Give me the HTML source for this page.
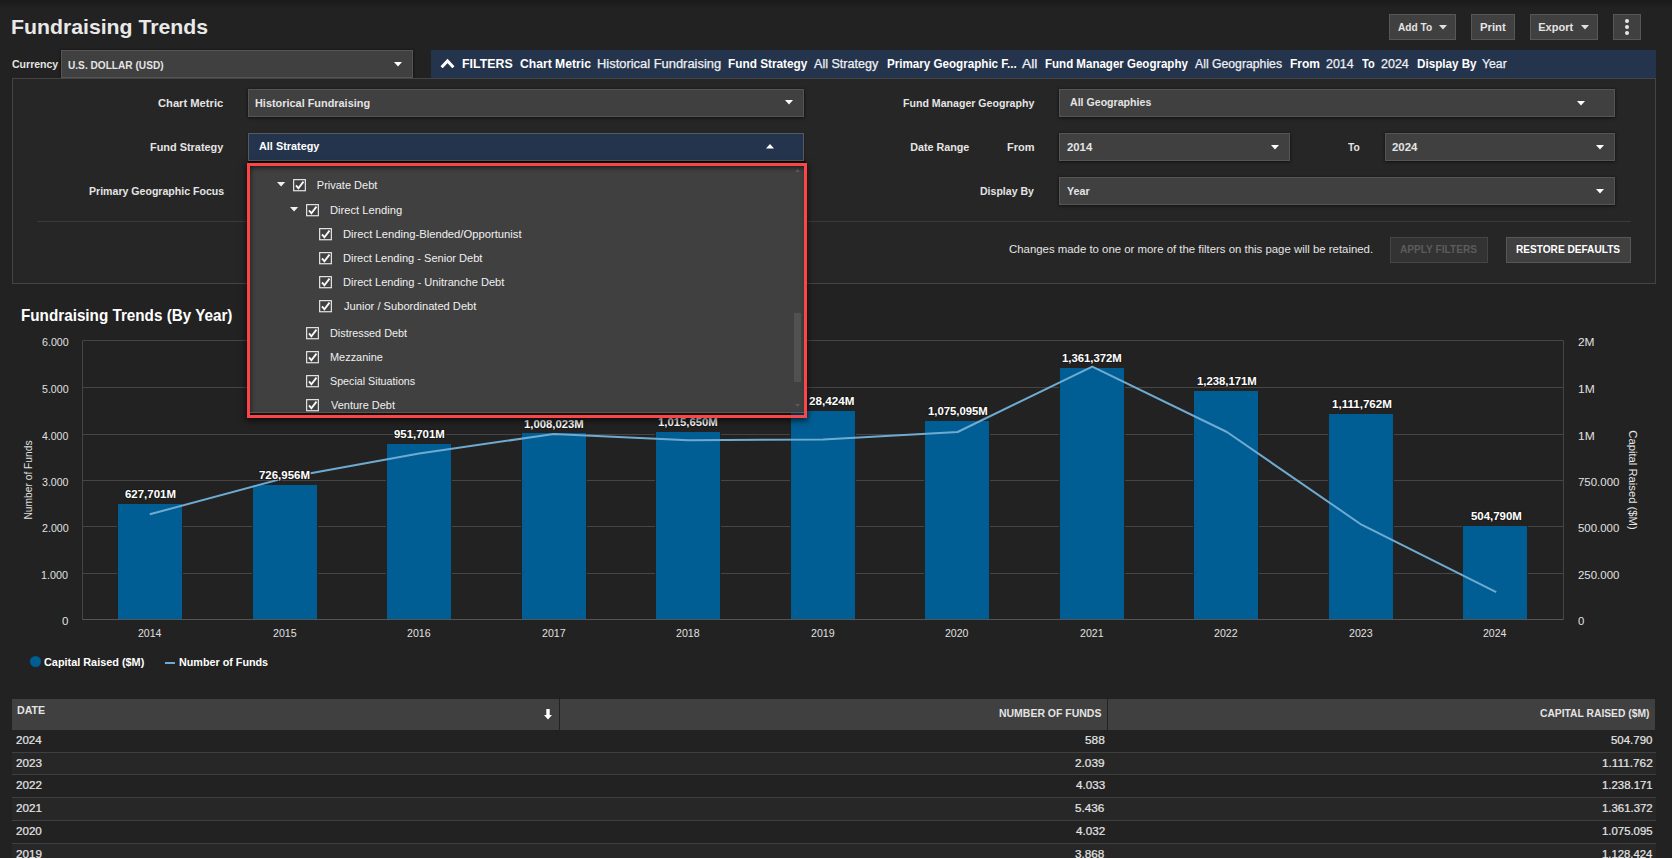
<!DOCTYPE html>
<html><head><meta charset="utf-8"><title>Fundraising Trends</title>
<style>
html,body{margin:0;padding:0;}
body{width:1672px;height:858px;overflow:hidden;background:#222222;position:relative;font-family:"Liberation Sans",sans-serif;}
.t{position:absolute;height:20px;line-height:20px;white-space:nowrap;transform-origin:0 50%;}
.sel{box-sizing:border-box;background:#404040;border:1px solid #555555;box-shadow:0 1px 3px rgba(0,0,0,.5),0 0 2px rgba(0,0,0,.3);}
.selo{box-sizing:border-box;background:#25344d;border:1px solid #565b63;box-shadow:0 1px 2px rgba(0,0,0,.45);}
.btn{box-sizing:border-box;background:#404040;border:1px solid #575757;}
svg{display:block;overflow:visible;}
</style></head><body>
<div style="position:absolute;left:0px;top:0px;width:1672px;height:9px;background:linear-gradient(#1b1b1b,#222222);"></div>
<div class="t" style="left:10.62px;top:16.5px;font-size:21px;color:#e9e9e9;font-weight:bold;transform:scaleX(1.0115);">Fundraising Trends</div>
<div class="btn" style="position:absolute;left:1389px;top:14px;width:67px;height:26px;"></div>
<div class="t" style="left:1397.75px;top:16.5px;font-size:11px;color:#e4e4e4;font-weight:bold;transform:scaleX(0.9201);">Add To</div>
<svg style="position:absolute;left:1439.0px;top:24.9px" width="8" height="4.5" viewBox="0 0 8 4.5"><polygon points="0,0 8,0 4.0,4.5" fill="#e0e0e0"/></svg>
<div class="btn" style="position:absolute;left:1471px;top:14px;width:44px;height:26px;"></div>
<div class="t" style="left:1479.76px;top:16.5px;font-size:11px;color:#e4e4e4;font-weight:bold;transform:scaleX(1.0307);">Print</div>
<div class="btn" style="position:absolute;left:1530px;top:14px;width:68px;height:26px;"></div>
<div class="t" style="left:1538.29px;top:16.5px;font-size:11px;color:#e4e4e4;font-weight:bold;">Export</div>
<svg style="position:absolute;left:1581.0px;top:24.9px" width="8" height="4.5" viewBox="0 0 8 4.5"><polygon points="0,0 8,0 4.0,4.5" fill="#e0e0e0"/></svg>
<div class="btn" style="position:absolute;left:1613px;top:14px;width:28px;height:26px;"></div>
<div style="position:absolute;left:1625px;top:19px;width:4px;height:4px;border-radius:50%;background:#e8e8e8;"></div>
<div style="position:absolute;left:1625px;top:25px;width:4px;height:4px;border-radius:50%;background:#e8e8e8;"></div>
<div style="position:absolute;left:1625px;top:31px;width:4px;height:4px;border-radius:50%;background:#e8e8e8;"></div>
<div class="t" style="left:11.58px;top:53.5px;font-size:10.75px;color:#e4e4e4;font-weight:bold;transform:scaleX(0.9794);">Currency</div>
<div class="sel" style="position:absolute;left:61px;top:50px;width:352px;height:28px;"></div>
<div class="t" style="left:68.39px;top:54.5px;font-size:10.75px;color:#e4e4e4;font-weight:bold;transform:scaleX(0.9417);">U.S. DOLLAR (USD)</div>
<svg style="position:absolute;left:394.0px;top:61.8px" width="8" height="4.5" viewBox="0 0 8 4.5"><polygon points="0,0 8,0 4.0,4.5" fill="#fff"/></svg>
<div style="position:absolute;left:431px;top:50px;width:1225px;height:28px;background:#25344d;"></div>
<svg style="position:absolute;left:440px;top:58px" width="15" height="11" viewBox="0 0 15 11"><polyline points="1.6,9.2 7.5,3 13.4,9.2" fill="none" stroke="#fff" stroke-width="3"/></svg>
<div class="t" style="left:461.90px;top:54.0px;font-size:12.25px;color:#ffffff;font-weight:bold;transform:scaleX(1.0107);">FILTERS</div>
<div class="t" style="left:520.41px;top:54.0px;font-size:12px;color:#ffffff;font-weight:bold;transform:scaleX(1.0124);">Chart Metric</div>
<div class="t" style="left:596.77px;top:54.0px;font-size:12px;color:#eef0f3;transform:scaleX(1.0756);-webkit-text-stroke:0.25px #eef0f3;">Historical Fundraising</div>
<div class="t" style="left:728.13px;top:54.0px;font-size:12px;color:#ffffff;font-weight:bold;transform:scaleX(0.9842);">Fund Strategy</div>
<div class="t" style="left:814.30px;top:54.0px;font-size:12px;color:#eef0f3;transform:scaleX(1.0476);-webkit-text-stroke:0.25px #eef0f3;">All Strategy</div>
<div class="t" style="left:886.94px;top:54.0px;font-size:12px;color:#ffffff;font-weight:bold;transform:scaleX(0.9684);">Primary Geographic F...</div>
<div class="t" style="left:1022.00px;top:54.0px;font-size:12px;color:#eef0f3;transform:scaleX(1.1587);-webkit-text-stroke:0.25px #eef0f3;">All</div>
<div class="t" style="left:1045.45px;top:54.0px;font-size:12px;color:#ffffff;font-weight:bold;transform:scaleX(0.9608);">Fund Manager Geography</div>
<div class="t" style="left:1194.60px;top:54.0px;font-size:12px;color:#eef0f3;transform:scaleX(1.0193);-webkit-text-stroke:0.25px #eef0f3;">All Geographies</div>
<div class="t" style="left:1290.02px;top:54.0px;font-size:12px;color:#ffffff;font-weight:bold;">From</div>
<div class="t" style="left:1325.78px;top:54.0px;font-size:12px;color:#eef0f3;transform:scaleX(1.0349);-webkit-text-stroke:0.25px #eef0f3;">2014</div>
<div class="t" style="left:1362.49px;top:54.0px;font-size:12px;color:#ffffff;font-weight:bold;transform:scaleX(0.9167);">To</div>
<div class="t" style="left:1381.07px;top:54.0px;font-size:12px;color:#eef0f3;transform:scaleX(1.0426);-webkit-text-stroke:0.25px #eef0f3;">2024</div>
<div class="t" style="left:1416.84px;top:54.0px;font-size:12px;color:#ffffff;font-weight:bold;transform:scaleX(0.9713);">Display By</div>
<div class="t" style="left:1482.15px;top:54.0px;font-size:12px;color:#eef0f3;transform:scaleX(1.0218);-webkit-text-stroke:0.25px #eef0f3;">Year</div>
<div style="position:absolute;left:12px;top:78px;width:1644px;height:206px;box-sizing:border-box;background:#262626;border:1px solid #444444;"></div>
<div style="position:absolute;left:37px;top:221px;width:1594px;height:1px;background:#3a3a3a;"></div>
<div class="t" style="left:158.35px;top:92.5px;font-size:10.75px;color:#e4e4e4;font-weight:bold;transform:scaleX(1.0399);">Chart Metric</div>
<div class="t" style="left:149.99px;top:136.5px;font-size:10.75px;color:#e4e4e4;font-weight:bold;transform:scaleX(1.0148);">Fund Strategy</div>
<div class="t" style="left:88.51px;top:180.5px;font-size:10.75px;color:#e4e4e4;font-weight:bold;transform:scaleX(0.9838);">Primary Geographic Focus</div>
<div class="sel" style="position:absolute;left:248px;top:89px;width:556px;height:28px;"></div>
<div class="t" style="left:255.49px;top:92.5px;font-size:10.75px;color:#e4e4e4;font-weight:bold;transform:scaleX(1.0137);">Historical Fundraising</div>
<svg style="position:absolute;left:785.0px;top:100.2px" width="8" height="4.5" viewBox="0 0 8 4.5"><polygon points="0,0 8,0 4.0,4.5" fill="#fff"/></svg>
<div class="selo" style="position:absolute;left:248px;top:133px;width:556px;height:28px;"></div>
<div class="t" style="left:258.93px;top:135.5px;font-size:10.75px;color:#ffffff;font-weight:bold;transform:scaleX(1.0110);">All Strategy</div>
<svg style="position:absolute;left:766.0px;top:144.2px" width="8" height="4.5" viewBox="0 0 8 4.5"><polygon points="0,4.5 4.0,0 8,4.5" fill="#fff"/></svg>
<div class="t" style="left:902.91px;top:92.5px;font-size:10.75px;color:#e4e4e4;font-weight:bold;transform:scaleX(0.9857);">Fund Manager Geography</div>
<div class="t" style="left:910.20px;top:136.5px;font-size:10.75px;color:#e4e4e4;font-weight:bold;">Date Range</div>
<div class="t" style="left:1007.39px;top:136.5px;font-size:10.75px;color:#e4e4e4;font-weight:bold;transform:scaleX(1.0223);">From</div>
<div class="t" style="left:1348.10px;top:136.5px;font-size:10.75px;color:#e4e4e4;font-weight:bold;transform:scaleX(0.9556);">To</div>
<div class="t" style="left:980.31px;top:180.5px;font-size:10.75px;color:#e4e4e4;font-weight:bold;transform:scaleX(0.9809);">Display By</div>
<div class="sel" style="position:absolute;left:1059px;top:89px;width:556px;height:28px;"></div>
<div class="t" style="left:1069.94px;top:92.0px;font-size:10.75px;color:#e4e4e4;font-weight:bold;transform:scaleX(0.9859);">All Geographies</div>
<svg style="position:absolute;left:1577.0px;top:101.0px" width="8" height="4.5" viewBox="0 0 8 4.5"><polygon points="0,0 8,0 4.0,4.5" fill="#fff"/></svg>
<div class="sel" style="position:absolute;left:1059px;top:133px;width:231px;height:28px;"></div>
<div class="t" style="left:1067.06px;top:136.5px;font-size:10.75px;color:#e4e4e4;font-weight:bold;transform:scaleX(1.0553);">2014</div>
<svg style="position:absolute;left:1271.0px;top:144.8px" width="8" height="4.5" viewBox="0 0 8 4.5"><polygon points="0,0 8,0 4.0,4.5" fill="#fff"/></svg>
<div class="sel" style="position:absolute;left:1385px;top:133px;width:230px;height:28px;"></div>
<div class="t" style="left:1392.36px;top:136.5px;font-size:10.75px;color:#e4e4e4;font-weight:bold;transform:scaleX(1.0637);">2024</div>
<svg style="position:absolute;left:1596.0px;top:144.8px" width="8" height="4.5" viewBox="0 0 8 4.5"><polygon points="0,0 8,0 4.0,4.5" fill="#fff"/></svg>
<div class="sel" style="position:absolute;left:1059px;top:177px;width:556px;height:28px;"></div>
<div class="t" style="left:1067.24px;top:180.5px;font-size:10.75px;color:#e4e4e4;font-weight:bold;transform:scaleX(0.9949);">Year</div>
<svg style="position:absolute;left:1596.0px;top:188.8px" width="8" height="4.5" viewBox="0 0 8 4.5"><polygon points="0,0 8,0 4.0,4.5" fill="#fff"/></svg>
<div class="t" style="left:1009.03px;top:238.9px;font-size:11.5px;color:#e4e4e4;transform:scaleX(0.9905);">Changes made to one or more of the filters on this page will be retained.</div>
<div style="position:absolute;left:1390px;top:237px;width:98px;height:26px;box-sizing:border-box;background:#333333;border:1px solid #454545;"></div>
<div class="t" style="left:1400.45px;top:238.6px;font-size:11px;color:#5c5c5c;font-weight:bold;transform:scaleX(0.9218);">APPLY FILTERS</div>
<div class="btn" style="position:absolute;left:1506px;top:237px;width:125px;height:26px;"></div>
<div class="t" style="left:1516.34px;top:238.6px;font-size:11px;color:#ffffff;font-weight:bold;transform:scaleX(0.9185);">RESTORE DEFAULTS</div>
<div class="t" style="left:21.41px;top:305.0px;font-size:16.5px;color:#ffffff;font-weight:bold;transform:scaleX(0.9236);">Fundraising Trends (By Year)</div>
<svg style="position:absolute;left:0;top:0" width="1672" height="700" viewBox="0 0 1672 700"><line x1="82.5" y1="340.50" x2="1563.5" y2="340.50" stroke="#454545" stroke-width="1"/><line x1="82.5" y1="387.50" x2="1563.5" y2="387.50" stroke="#454545" stroke-width="1"/><line x1="82.5" y1="434.50" x2="1563.5" y2="434.50" stroke="#454545" stroke-width="1"/><line x1="82.5" y1="480.50" x2="1563.5" y2="480.50" stroke="#454545" stroke-width="1"/><line x1="82.5" y1="526.50" x2="1563.5" y2="526.50" stroke="#454545" stroke-width="1"/><line x1="82.5" y1="573.50" x2="1563.5" y2="573.50" stroke="#454545" stroke-width="1"/><line x1="82.5" y1="619.50" x2="1563.5" y2="619.50" stroke="#454545" stroke-width="1"/><line x1="82.5" y1="340.5" x2="82.5" y2="619.5" stroke="#454545" stroke-width="1"/><line x1="1563.5" y1="340.5" x2="1563.5" y2="619.5" stroke="#454545" stroke-width="1"/><rect x="117.5" y="503.5" width="65" height="116.00" fill="#005e94" stroke="#222222" stroke-width="1"/><rect x="252.5" y="484.5" width="65" height="135.00" fill="#005e94" stroke="#222222" stroke-width="1"/><rect x="386.5" y="443.5" width="65" height="176.00" fill="#005e94" stroke="#222222" stroke-width="1"/><rect x="521.5" y="432.5" width="65" height="187.00" fill="#005e94" stroke="#222222" stroke-width="1"/><rect x="655.5" y="431.5" width="65" height="188.00" fill="#005e94" stroke="#222222" stroke-width="1"/><rect x="790.5" y="410.5" width="65" height="209.00" fill="#005e94" stroke="#222222" stroke-width="1"/><rect x="924.5" y="420.5" width="65" height="199.00" fill="#005e94" stroke="#222222" stroke-width="1"/><rect x="1059.5" y="367.5" width="65" height="252.00" fill="#005e94" stroke="#222222" stroke-width="1"/><rect x="1193.5" y="390.5" width="65" height="229.00" fill="#005e94" stroke="#222222" stroke-width="1"/><rect x="1328.5" y="413.5" width="65" height="206.00" fill="#005e94" stroke="#222222" stroke-width="1"/><rect x="1462.5" y="525.5" width="65" height="94.00" fill="#005e94" stroke="#222222" stroke-width="1"/><line x1="82.5" y1="619.5" x2="1563.5" y2="619.5" stroke="#555" stroke-width="1"/><polyline points="149.8,514.3 284.5,478.1 419.1,453.5 553.7,434.0 688.4,440.2 823.0,439.6 957.6,432.0 1092.3,366.7 1226.9,432.0 1361.5,524.7 1496.2,592.2" fill="none" stroke="#6fabd1" stroke-width="2" stroke-linejoin="round"/></svg>
<div class="t" style="left:41.77px;top:332.7px;font-size:10px;color:#e0e0e0;transform:scaleX(1.0642);">6.000</div>
<div class="t" style="left:41.88px;top:379.7px;font-size:10px;color:#e0e0e0;transform:scaleX(1.0598);">5.000</div>
<div class="t" style="left:42.09px;top:426.7px;font-size:10px;color:#e0e0e0;transform:scaleX(1.0511);">4.000</div>
<div class="t" style="left:41.93px;top:472.7px;font-size:10px;color:#e0e0e0;transform:scaleX(1.0576);">3.000</div>
<div class="t" style="left:41.77px;top:518.7px;font-size:10px;color:#e0e0e0;transform:scaleX(1.0642);">2.000</div>
<div class="t" style="left:41.49px;top:565.7px;font-size:10px;color:#e0e0e0;transform:scaleX(1.0753);">1.000</div>
<div class="t" style="left:62.00px;top:611.7px;font-size:10px;color:#e0e0e0;transform:scaleX(1.1546);">0</div>
<div class="t" style="left:1577.90px;top:333.0px;font-size:10px;color:#e0e0e0;transform:scaleX(1.1905);">2M</div>
<div class="t" style="left:1577.60px;top:380.0px;font-size:10px;color:#e0e0e0;transform:scaleX(1.2000);">1M</div>
<div class="t" style="left:1577.60px;top:427.0px;font-size:10px;color:#e0e0e0;transform:scaleX(1.2000);">1M</div>
<div class="t" style="left:1577.93px;top:473.0px;font-size:10px;color:#e0e0e0;transform:scaleX(1.1445);">750.000</div>
<div class="t" style="left:1578.04px;top:519.0px;font-size:10px;color:#e0e0e0;transform:scaleX(1.1412);">500.000</div>
<div class="t" style="left:1577.93px;top:566.0px;font-size:10px;color:#e0e0e0;transform:scaleX(1.1445);">250.000</div>
<div class="t" style="left:1578.10px;top:612.0px;font-size:10px;color:#e0e0e0;transform:scaleX(1.1340);">0</div>
<div class="t" style="left:138.17px;top:624.0px;font-size:10px;color:#e0e0e0;transform:scaleX(1.0512);">2014</div>
<div class="t" style="left:272.67px;top:624.0px;font-size:10px;color:#e0e0e0;transform:scaleX(1.0585);">2015</div>
<div class="t" style="left:407.17px;top:624.0px;font-size:10px;color:#e0e0e0;transform:scaleX(1.0585);">2016</div>
<div class="t" style="left:541.67px;top:624.0px;font-size:10px;color:#e0e0e0;transform:scaleX(1.0610);">2017</div>
<div class="t" style="left:676.17px;top:624.0px;font-size:10px;color:#e0e0e0;transform:scaleX(1.0585);">2018</div>
<div class="t" style="left:810.67px;top:624.0px;font-size:10px;color:#e0e0e0;transform:scaleX(1.0610);">2019</div>
<div class="t" style="left:945.17px;top:624.0px;font-size:10px;color:#e0e0e0;transform:scaleX(1.0561);">2020</div>
<div class="t" style="left:1079.67px;top:624.0px;font-size:10px;color:#e0e0e0;transform:scaleX(1.0610);">2021</div>
<div class="t" style="left:1214.17px;top:624.0px;font-size:10px;color:#e0e0e0;transform:scaleX(1.0610);">2022</div>
<div class="t" style="left:1348.67px;top:624.0px;font-size:10px;color:#e0e0e0;transform:scaleX(1.0585);">2023</div>
<div class="t" style="left:1483.17px;top:624.0px;font-size:10px;color:#e0e0e0;transform:scaleX(1.0512);">2024</div>
<div class="t" style="left:124.52px;top:483.7px;font-size:11px;color:#ffffff;font-weight:bold;transform:scaleX(1.0408);text-shadow:-1px -1px 0 #1c1c1c,1px -1px 0 #1c1c1c,-1px 1px 0 #1c1c1c,1px 1px 0 #1c1c1c,0 1px 0 #1c1c1c,0 -1px 0 #1c1c1c,1px 0 0 #1c1c1c,-1px 0 0 #1c1c1c;">627,701M</div>
<div class="t" style="left:259.10px;top:465.4px;font-size:11px;color:#ffffff;font-weight:bold;transform:scaleX(1.0419);text-shadow:-1px -1px 0 #1c1c1c,1px -1px 0 #1c1c1c,-1px 1px 0 #1c1c1c,1px 1px 0 #1c1c1c,0 1px 0 #1c1c1c,0 -1px 0 #1c1c1c,1px 0 0 #1c1c1c,-1px 0 0 #1c1c1c;">726,956M</div>
<div class="t" style="left:393.85px;top:423.9px;font-size:11px;color:#ffffff;font-weight:bold;transform:scaleX(1.0396);text-shadow:-1px -1px 0 #1c1c1c,1px -1px 0 #1c1c1c,-1px 1px 0 #1c1c1c,1px 1px 0 #1c1c1c,0 1px 0 #1c1c1c,0 -1px 0 #1c1c1c,1px 0 0 #1c1c1c,-1px 0 0 #1c1c1c;">951,701M</div>
<div class="t" style="left:523.85px;top:413.5px;font-size:11px;color:#ffffff;font-weight:bold;transform:scaleX(1.0289);text-shadow:-1px -1px 0 #1c1c1c,1px -1px 0 #1c1c1c,-1px 1px 0 #1c1c1c,1px 1px 0 #1c1c1c,0 1px 0 #1c1c1c,0 -1px 0 #1c1c1c,1px 0 0 #1c1c1c,-1px 0 0 #1c1c1c;">1,008,023M</div>
<div class="t" style="left:658.48px;top:412.1px;font-size:11px;color:#ffffff;font-weight:bold;transform:scaleX(1.0289);text-shadow:-1px -1px 0 #1c1c1c,1px -1px 0 #1c1c1c,-1px 1px 0 #1c1c1c,1px 1px 0 #1c1c1c,0 1px 0 #1c1c1c,0 -1px 0 #1c1c1c,1px 0 0 #1c1c1c,-1px 0 0 #1c1c1c;">1,015,650M</div>
<div class="t" style="left:808.65px;top:391.2px;font-size:11px;color:#ffffff;font-weight:bold;transform:scaleX(1.0598);text-shadow:-1px -1px 0 #1c1c1c,1px -1px 0 #1c1c1c,-1px 1px 0 #1c1c1c,1px 1px 0 #1c1c1c,0 1px 0 #1c1c1c,0 -1px 0 #1c1c1c,1px 0 0 #1c1c1c,-1px 0 0 #1c1c1c;">28,424M</div>
<div class="t" style="left:927.76px;top:401.1px;font-size:11px;color:#ffffff;font-weight:bold;transform:scaleX(1.0289);text-shadow:-1px -1px 0 #1c1c1c,1px -1px 0 #1c1c1c,-1px 1px 0 #1c1c1c,1px 1px 0 #1c1c1c,0 1px 0 #1c1c1c,0 -1px 0 #1c1c1c,1px 0 0 #1c1c1c,-1px 0 0 #1c1c1c;">1,075,095M</div>
<div class="t" style="left:1062.39px;top:348.2px;font-size:11px;color:#ffffff;font-weight:bold;transform:scaleX(1.0289);text-shadow:-1px -1px 0 #1c1c1c,1px -1px 0 #1c1c1c,-1px 1px 0 #1c1c1c,1px 1px 0 #1c1c1c,0 1px 0 #1c1c1c,0 -1px 0 #1c1c1c,1px 0 0 #1c1c1c,-1px 0 0 #1c1c1c;">1,361,372M</div>
<div class="t" style="left:1197.03px;top:370.9px;font-size:11px;color:#ffffff;font-weight:bold;transform:scaleX(1.0289);text-shadow:-1px -1px 0 #1c1c1c,1px -1px 0 #1c1c1c,-1px 1px 0 #1c1c1c,1px 1px 0 #1c1c1c,0 1px 0 #1c1c1c,0 -1px 0 #1c1c1c,1px 0 0 #1c1c1c,-1px 0 0 #1c1c1c;">1,238,171M</div>
<div class="t" style="left:1331.65px;top:394.3px;font-size:11px;color:#ffffff;font-weight:bold;transform:scaleX(1.0513);text-shadow:-1px -1px 0 #1c1c1c,1px -1px 0 #1c1c1c,-1px 1px 0 #1c1c1c,1px 1px 0 #1c1c1c,0 1px 0 #1c1c1c,0 -1px 0 #1c1c1c,1px 0 0 #1c1c1c,-1px 0 0 #1c1c1c;">1,111,762M</div>
<div class="t" style="left:1470.94px;top:506.4px;font-size:11px;color:#ffffff;font-weight:bold;transform:scaleX(1.0396);text-shadow:-1px -1px 0 #1c1c1c,1px -1px 0 #1c1c1c,-1px 1px 0 #1c1c1c,1px 1px 0 #1c1c1c,0 1px 0 #1c1c1c,0 -1px 0 #1c1c1c,1px 0 0 #1c1c1c,-1px 0 0 #1c1c1c;">504,790M</div>
<div class="t" style="left:-21px;top:470px;width:100px;text-align:center;font-size:10.25px;color:#e0e0e0;transform-origin:50% 50%;transform:rotate(-90deg);">Number of Funds</div>
<div class="t" style="left:1582.5px;top:470px;width:100px;text-align:center;font-size:11.25px;color:#e6e6e6;transform-origin:50% 50%;transform:rotate(90deg);letter-spacing:0px">Capital Raised ($M)</div>
<div style="position:absolute;left:29.5px;top:656px;width:11px;height:11px;border-radius:50%;background:#005e94;"></div>
<div class="t" style="left:44.47px;top:652.0px;font-size:11px;color:#ffffff;font-weight:bold;transform:scaleX(0.9882);">Capital Raised ($M)</div>
<div style="position:absolute;left:165px;top:661.5px;width:9.5px;height:2.4px;background:#6fabd1;"></div>
<div class="t" style="left:179.30px;top:652.0px;font-size:11px;color:#ffffff;font-weight:bold;transform:scaleX(0.9786);">Number of Funds</div>
<div style="position:absolute;left:12px;top:699px;width:547px;height:31px;background:#404040;"></div>
<div style="position:absolute;left:560px;top:699px;width:547px;height:31px;background:#404040;"></div>
<div style="position:absolute;left:1108px;top:699px;width:547px;height:31px;background:#404040;"></div>
<div class="t" style="left:17.31px;top:700.0px;font-size:11px;color:#e4e4e4;font-weight:bold;transform:scaleX(0.9645);">DATE</div>
<div class="t" style="left:999.02px;top:703.0px;font-size:11px;color:#e4e4e4;font-weight:bold;transform:scaleX(0.9518);">NUMBER OF FUNDS</div>
<div class="t" style="left:1539.99px;top:703.0px;font-size:11px;color:#e4e4e4;font-weight:bold;transform:scaleX(0.9358);">CAPITAL RAISED ($M)</div>
<svg style="position:absolute;left:544px;top:709px" width="8" height="11" viewBox="0 0 8 11"><path d="M2.3,0H5.7V6H8L4,10.5L0,6H2.3Z" fill="#fff"/></svg>
<div style="position:absolute;left:12px;top:752px;width:1644px;height:1px;background:#3f3f3f;"></div>
<div class="t" style="left:15.72px;top:730.1px;font-size:11px;color:#e4e4e4;transform:scaleX(1.0486);-webkit-text-stroke:0.22px #e4e4e4;">2024</div>
<div class="t" style="left:1085.03px;top:730.1px;font-size:11px;color:#e4e4e4;transform:scaleX(1.0783);-webkit-text-stroke:0.22px #e4e4e4;">588</div>
<div class="t" style="left:1611.04px;top:730.1px;font-size:11px;color:#e4e4e4;transform:scaleX(1.0401);-webkit-text-stroke:0.22px #e4e4e4;">504.790</div>
<div style="position:absolute;left:12px;top:753px;width:1644px;height:21px;background:#272727;"></div>
<div style="position:absolute;left:12px;top:774px;width:1644px;height:1px;background:#3f3f3f;"></div>
<div class="t" style="left:15.72px;top:752.6px;font-size:11px;color:#e4e4e4;transform:scaleX(1.0560);-webkit-text-stroke:0.22px #e4e4e4;">2023</div>
<div class="t" style="left:1075.31px;top:752.6px;font-size:11px;color:#e4e4e4;transform:scaleX(1.0735);-webkit-text-stroke:0.22px #e4e4e4;">2.039</div>
<div class="t" style="left:1601.82px;top:752.6px;font-size:11px;color:#e4e4e4;transform:scaleX(1.0722);-webkit-text-stroke:0.22px #e4e4e4;">1.111.762</div>
<div style="position:absolute;left:12px;top:797px;width:1644px;height:1px;background:#3f3f3f;"></div>
<div class="t" style="left:15.72px;top:775.1px;font-size:11px;color:#e4e4e4;transform:scaleX(1.0585);-webkit-text-stroke:0.22px #e4e4e4;">2022</div>
<div class="t" style="left:1075.67px;top:775.1px;font-size:11px;color:#e4e4e4;transform:scaleX(1.0581);-webkit-text-stroke:0.22px #e4e4e4;">4.033</div>
<div class="t" style="left:1601.85px;top:775.1px;font-size:11px;color:#e4e4e4;transform:scaleX(1.0351);-webkit-text-stroke:0.22px #e4e4e4;">1.238.171</div>
<div style="position:absolute;left:12px;top:798px;width:1644px;height:22px;background:#272727;"></div>
<div style="position:absolute;left:12px;top:820px;width:1644px;height:1px;background:#3f3f3f;"></div>
<div class="t" style="left:15.72px;top:798.1px;font-size:11px;color:#e4e4e4;transform:scaleX(1.0585);-webkit-text-stroke:0.22px #e4e4e4;">2021</div>
<div class="t" style="left:1075.43px;top:798.1px;font-size:11px;color:#e4e4e4;transform:scaleX(1.0669);-webkit-text-stroke:0.22px #e4e4e4;">5.436</div>
<div class="t" style="left:1601.85px;top:798.1px;font-size:11px;color:#e4e4e4;transform:scaleX(1.0351);-webkit-text-stroke:0.22px #e4e4e4;">1.361.372</div>
<div style="position:absolute;left:12px;top:843px;width:1644px;height:1px;background:#3f3f3f;"></div>
<div class="t" style="left:15.72px;top:821.1px;font-size:11px;color:#e4e4e4;transform:scaleX(1.0535);-webkit-text-stroke:0.22px #e4e4e4;">2020</div>
<div class="t" style="left:1075.67px;top:821.1px;font-size:11px;color:#e4e4e4;transform:scaleX(1.0603);-webkit-text-stroke:0.22px #e4e4e4;">4.032</div>
<div class="t" style="left:1601.85px;top:821.1px;font-size:11px;color:#e4e4e4;transform:scaleX(1.0339);-webkit-text-stroke:0.22px #e4e4e4;">1.075.095</div>
<div style="position:absolute;left:12px;top:844px;width:1644px;height:21px;background:#272727;"></div>
<div style="position:absolute;left:12px;top:865px;width:1644px;height:1px;background:#3f3f3f;"></div>
<div class="t" style="left:15.72px;top:843.6px;font-size:11px;color:#e4e4e4;transform:scaleX(1.0585);-webkit-text-stroke:0.22px #e4e4e4;">2019</div>
<div class="t" style="left:1075.49px;top:843.6px;font-size:11px;color:#e4e4e4;transform:scaleX(1.0647);-webkit-text-stroke:0.22px #e4e4e4;">3.868</div>
<div class="t" style="left:1601.85px;top:843.6px;font-size:11px;color:#e4e4e4;transform:scaleX(1.0303);-webkit-text-stroke:0.22px #e4e4e4;">1.128.424</div>
<div style="position:absolute;left:248px;top:161px;width:558px;height:5px;background:rgba(0,0,0,.55);"></div>
<div style="position:absolute;left:250px;top:412px;width:554px;height:3px;background:rgba(0,0,0,.45);"></div>
<div style="position:absolute;left:250px;top:166px;width:554px;height:247px;box-sizing:border-box;background:#404040;border-bottom:1px solid #585858;box-shadow:inset 0 4px 5px -2px rgba(0,0,0,.5),inset 4px 0 5px -3px rgba(0,0,0,.35);"></div>
<div style="position:absolute;left:794px;top:313px;width:7px;height:68.5px;background:#515151;"></div>
<svg style="position:absolute;left:795.0px;top:168.5px" width="5" height="3" viewBox="0 0 5 3"><polygon points="0,3 2.5,0 5,3" fill="#555555"/></svg>
<svg style="position:absolute;left:795.0px;top:403.7px" width="5" height="3" viewBox="0 0 5 3"><polygon points="0,0 5,0 2.5,3" fill="#5a5a5a"/></svg>
<svg style="position:absolute;left:293px;top:178.8px" width="13" height="12.4" viewBox="0 0 13 12.4"><rect x="0.65" y="0.65" width="11.7" height="11.1" fill="#404040" stroke="#ececec" stroke-width="1.15"/><polyline points="3.0,6.4 5.4,9.3 10.5,2.6" fill="none" stroke="#f8f8f8" stroke-width="1.9"/></svg>
<div class="t" style="left:316.82px;top:175.0px;font-size:11px;color:#f0f0f0;">Private Debt</div>
<svg style="position:absolute;left:276.9px;top:181.9px" width="8.2" height="4.4" viewBox="0 0 8.2 4.4"><polygon points="0,0 8.2,0 4.1,4.4" fill="#f0f0f0"/></svg>
<svg style="position:absolute;left:306px;top:203.8px" width="13" height="12.4" viewBox="0 0 13 12.4"><rect x="0.65" y="0.65" width="11.7" height="11.1" fill="#404040" stroke="#ececec" stroke-width="1.15"/><polyline points="3.0,6.4 5.4,9.3 10.5,2.6" fill="none" stroke="#f8f8f8" stroke-width="1.9"/></svg>
<div class="t" style="left:329.81px;top:200.0px;font-size:11px;color:#f0f0f0;transform:scaleX(1.0165);">Direct Lending</div>
<svg style="position:absolute;left:289.9px;top:206.9px" width="8.2" height="4.4" viewBox="0 0 8.2 4.4"><polygon points="0,0 8.2,0 4.1,4.4" fill="#f0f0f0"/></svg>
<svg style="position:absolute;left:319px;top:227.8px" width="13" height="12.4" viewBox="0 0 13 12.4"><rect x="0.65" y="0.65" width="11.7" height="11.1" fill="#404040" stroke="#ececec" stroke-width="1.15"/><polyline points="3.0,6.4 5.4,9.3 10.5,2.6" fill="none" stroke="#f8f8f8" stroke-width="1.9"/></svg>
<div class="t" style="left:342.80px;top:224.0px;font-size:11px;color:#f0f0f0;transform:scaleX(1.0209);">Direct Lending-Blended/Opportunist</div>
<svg style="position:absolute;left:319px;top:251.8px" width="13" height="12.4" viewBox="0 0 13 12.4"><rect x="0.65" y="0.65" width="11.7" height="11.1" fill="#404040" stroke="#ececec" stroke-width="1.15"/><polyline points="3.0,6.4 5.4,9.3 10.5,2.6" fill="none" stroke="#f8f8f8" stroke-width="1.9"/></svg>
<div class="t" style="left:342.82px;top:248.0px;font-size:11px;color:#f0f0f0;transform:scaleX(1.0045);">Direct Lending - Senior Debt</div>
<svg style="position:absolute;left:319px;top:275.8px" width="13" height="12.4" viewBox="0 0 13 12.4"><rect x="0.65" y="0.65" width="11.7" height="11.1" fill="#404040" stroke="#ececec" stroke-width="1.15"/><polyline points="3.0,6.4 5.4,9.3 10.5,2.6" fill="none" stroke="#f8f8f8" stroke-width="1.9"/></svg>
<div class="t" style="left:342.81px;top:272.0px;font-size:11px;color:#f0f0f0;transform:scaleX(1.0070);">Direct Lending - Unitranche Debt</div>
<svg style="position:absolute;left:319px;top:299.8px" width="13" height="12.4" viewBox="0 0 13 12.4"><rect x="0.65" y="0.65" width="11.7" height="11.1" fill="#404040" stroke="#ececec" stroke-width="1.15"/><polyline points="3.0,6.4 5.4,9.3 10.5,2.6" fill="none" stroke="#f8f8f8" stroke-width="1.9"/></svg>
<div class="t" style="left:343.53px;top:296.0px;font-size:11px;color:#f0f0f0;transform:scaleX(1.0116);">Junior / Subordinated Debt</div>
<svg style="position:absolute;left:306px;top:326.8px" width="13" height="12.4" viewBox="0 0 13 12.4"><rect x="0.65" y="0.65" width="11.7" height="11.1" fill="#404040" stroke="#ececec" stroke-width="1.15"/><polyline points="3.0,6.4 5.4,9.3 10.5,2.6" fill="none" stroke="#f8f8f8" stroke-width="1.9"/></svg>
<div class="t" style="left:329.83px;top:323.0px;font-size:11px;color:#f0f0f0;transform:scaleX(0.9841);">Distressed Debt</div>
<svg style="position:absolute;left:306px;top:350.8px" width="13" height="12.4" viewBox="0 0 13 12.4"><rect x="0.65" y="0.65" width="11.7" height="11.1" fill="#404040" stroke="#ececec" stroke-width="1.15"/><polyline points="3.0,6.4 5.4,9.3 10.5,2.6" fill="none" stroke="#f8f8f8" stroke-width="1.9"/></svg>
<div class="t" style="left:329.83px;top:347.0px;font-size:11px;color:#f0f0f0;transform:scaleX(0.9930);">Mezzanine</div>
<svg style="position:absolute;left:306px;top:374.8px" width="13" height="12.4" viewBox="0 0 13 12.4"><rect x="0.65" y="0.65" width="11.7" height="11.1" fill="#404040" stroke="#ececec" stroke-width="1.15"/><polyline points="3.0,6.4 5.4,9.3 10.5,2.6" fill="none" stroke="#f8f8f8" stroke-width="1.9"/></svg>
<div class="t" style="left:330.22px;top:371.0px;font-size:11px;color:#f0f0f0;transform:scaleX(0.9738);">Special Situations</div>
<svg style="position:absolute;left:306px;top:398.8px" width="13" height="12.4" viewBox="0 0 13 12.4"><rect x="0.65" y="0.65" width="11.7" height="11.1" fill="#404040" stroke="#ececec" stroke-width="1.15"/><polyline points="3.0,6.4 5.4,9.3 10.5,2.6" fill="none" stroke="#f8f8f8" stroke-width="1.9"/></svg>
<div class="t" style="left:330.70px;top:395.0px;font-size:11px;color:#f0f0f0;transform:scaleX(0.9956);">Venture Debt</div>
<div style="position:absolute;left:247px;top:163px;width:560px;height:255px;box-sizing:border-box;border:3px solid #fb4547;box-shadow:0 2px 6px 1px rgba(0,0,0,.6);"></div>
</body></html>
